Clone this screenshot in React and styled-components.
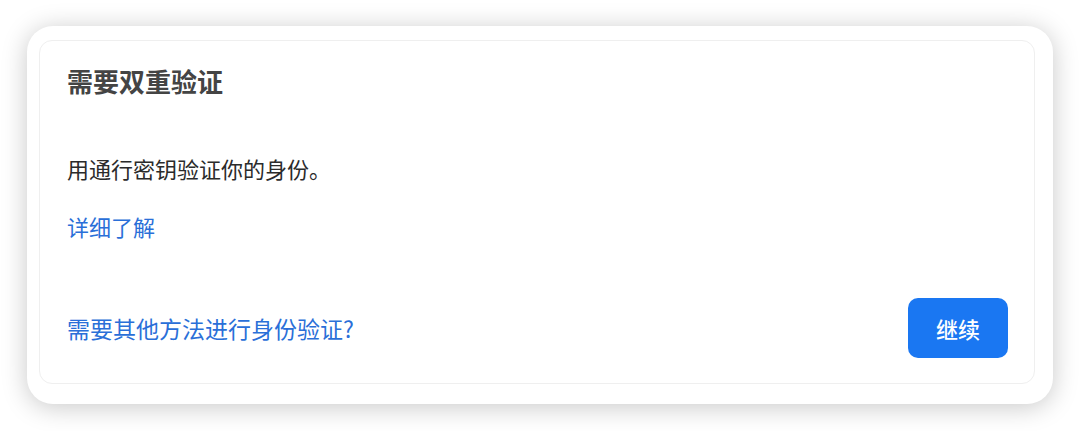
import React from 'react'
import styled, { createGlobalStyle } from 'styled-components'

const GlobalStyle = createGlobalStyle`
  html, body {
    margin: 0;
    padding: 0;
    background: #ffffff;
  }
  body {
    font-family: "PingFang SC", "Noto Sans CJK SC", "Noto Sans", sans-serif;
  }
`

const Page = styled.div`
  width: 1080px;
  height: 431px;
  box-sizing: border-box;
  padding: 26px 27px 27px 27px;
  background: #ffffff;
`

const Frame = styled.div`
  height: 100%;
  box-sizing: border-box;
  padding: 14px 18px 20px 12px;
  background: #ffffff;
  border-radius: 26px;
  box-shadow: 0 3px 26px rgba(0, 0, 0, 0.22);
`

const Dialog = styled.div`
  height: 100%;
  box-sizing: border-box;
  display: flex;
  flex-direction: column;
  padding: 24px 26px 25px 27px;
  background: #ffffff;
  border: 1px solid #efefef;
  border-radius: 13px;
`

const Title = styled.h2`
  margin: 0;
  font-size: 26px;
  line-height: 32px;
  font-weight: 700;
  color: #444444;
`

const Body = styled.p`
  margin: 56px 0 0;
  font-size: 22px;
  line-height: 30px;
  color: #2b2b2b;
`

const Link = styled.a`
  font-size: ${p => p.size || 22}px;
  line-height: 30px;
  color: #2a6fd8;
  text-decoration: none;
  cursor: pointer;
`

const LearnMore = styled.div`
  margin-top: 28px;
`

const Footer = styled.div`
  margin-top: auto;
  display: flex;
  align-items: center;
  justify-content: space-between;
`

const Button = styled.button`
  width: 100px;
  height: 60px;
  border: none;
  border-radius: 10px;
  background: #1a77f2;
  color: #ffffff;
  font-family: inherit;
  font-size: 22px;
  font-weight: 500;
  cursor: pointer;
`

export default function App() {
  return (
    <>
      <GlobalStyle />
      <Page>
        <Frame>
          <Dialog>
            <Title>需要双重验证</Title>
            <Body>用通行密钥验证你的身份。</Body>
            <LearnMore>
              <Link>详细了解</Link>
            </LearnMore>
            <Footer>
              <Link size={23}>需要其他方法进行身份验证?</Link>
              <Button>继续</Button>
            </Footer>
          </Dialog>
        </Frame>
      </Page>
    </>
  )
}
